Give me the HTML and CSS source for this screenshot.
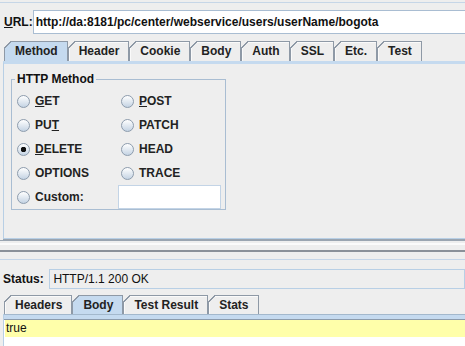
FILE: index.html
```html
<!DOCTYPE html>
<html lang="en">
<head>
    <meta charset="UTF-8">
    <title>RESTClient</title>
    <link rel="stylesheet" href="styles.css">
</head>
<body>
    <div class="window">
        <div class="top-edge"></div>

        <div class="url-row">
            <label class="url-label"><u>U</u>RL:</label>
            <div class="field url-field">http://da:8181/pc/center/webservice/users/userName/bogota</div>
        </div>

        <div class="tab-strip">
            <div class="tab selected">Method</div>
            <div class="tab">Header</div>
            <div class="tab">Cookie</div>
            <div class="tab">Body</div>
            <div class="tab">Auth</div>
            <div class="tab">SSL</div>
            <div class="tab">Etc.</div>
            <div class="tab">Test</div>
        </div>
        <div class="tab-panel req-panel">
            <fieldset class="group">
                <legend>HTTP Method</legend>
                <div class="radio-grid">
                    <div class="radio"><span class="dot"></span><span><u>G</u>ET</span></div>
                    <div class="radio right"><span class="dot"></span><span><u>P</u>OST</span></div>
                    <div class="radio"><span class="dot"></span><span>PU<u>T</u></span></div>
                    <div class="radio right"><span class="dot"></span><span>PATCH</span></div>
                    <div class="radio"><span class="dot checked"></span><span><u>D</u>ELETE</span></div>
                    <div class="radio right"><span class="dot"></span><span>HEAD</span></div>
                    <div class="radio"><span class="dot"></span><span>OPTIONS</span></div>
                    <div class="radio right"><span class="dot"></span><span>TRACE</span></div>
                    <div class="radio"><span class="dot"></span><span>Custom:</span></div>
                    <div class="field custom-field"></div>
                </div>
            </fieldset>
        </div>

        <div class="splitter"></div>

        <div class="lower">
            <div class="status-row">
                <label class="status-label">Status:</label>
                <div class="field status-field">HTTP/1.1 200 OK</div>
            </div>

            <div class="tab-strip resp-strip">
                <div class="tab">Headers</div>
                <div class="tab selected">Body</div>
                <div class="tab">Test Result</div>
                <div class="tab">Stats</div>
            </div>
            <div class="resp-panel">
                <div class="body-line">true</div>
            </div>
        </div>
    </div>
</body>
</html>
```

FILE: styles.css
```css
* {
    box-sizing: border-box;
}
body {
    margin: 0;
    background-color: #eeeeee;
    font-family: "Liberation Sans", Arial, sans-serif;
    font-size: 12px;
    color: #111;
}
.window {
    width: 465px;
    height: 346px;
    overflow: hidden;
}
.top-edge {
    height: 3px;
    border-bottom: 1px solid #c6d6e7;
}
.url-row {
    display: flex;
    align-items: center;
    padding: 7px 0 0 4px;
}
.url-label {
    width: 34px;
    font-weight: bold;
}
.field {
    height: 24px;
    border: 1px solid #a9bdd2;
    background-color: white;
    line-height: 22px;
    white-space: nowrap;
}
.url-field {
    flex: 0 0 440px;
    padding-left: 2px;
    font-weight: bold;
}

/* tabs */
.tab-strip {
    display: flex;
    height: 20px;
    margin-top: 7px;
    padding-left: 4px;
}
.tab {
    position: relative;
    height: 20px;
    padding: 0 9px 0 10px;
    border: 1px solid #8e99a6;
    border-bottom: none;
    background-color: #eeeeee;
    box-shadow: inset 1px 1px #fafafa;
    font-weight: bold;
    line-height: 19px;
    color: #222;
}
.tab::before {
    content: "";
    position: absolute;
    top: -1px;
    left: -1px;
    width: 7px;
    height: 7px;
    background: linear-gradient(135deg, #eeeeee 0 44%, #8e99a6 44% 58%, transparent 58%);
}
.tab.selected {
    background-color: #c5daef;
    box-shadow: none;
}
.tab-panel {
    height: 178px;
    margin: 0 -10px 0 3px;
    border: 1px solid #b8cfe5;
    border-top: 3px solid #c5daef;
    box-shadow: 0 1px #9aa5b1;
}

/* http method group */
.group {
    width: 215px;
    margin: 8px 0 0 7px;
    padding: 0;
    border: 1px solid #a9bdd2;
}
.group legend {
    margin-left: 3px;
    padding: 0 2px;
    line-height: 14px;
    font-weight: bold;
}
.radio-grid {
    display: grid;
    grid-template-columns: 101px 1fr;
    grid-auto-rows: 24px;
    padding: 3px 0 0 5px;
}
.radio {
    display: flex;
    align-items: center;
    gap: 5px;
    font-weight: bold;
    color: #222;
}
.radio.right {
    margin-left: 3px;
}
.dot {
    width: 13px;
    height: 13px;
    border: 1px solid #8d9cad;
    border-radius: 50%;
    background: linear-gradient(#ffffff, #c4d3e3);
}
.dot.checked {
    background: radial-gradient(circle, #111 0 2.5px, transparent 3px), linear-gradient(#ffffff, #c4d3e3);
}
.custom-field {
    width: 103px;
    align-self: center;
    border-color: #c3d4e6;
}

/* split pane divider */
.splitter {
    height: 12px;
    margin-top: 1px;
    border-top: 1px solid #9aa5b1;
    border-bottom: 2px solid #8a9099;
    background: linear-gradient(#eeeeee 0 2px, #fbfbfb 2px 4px, #eeeeee 4px);
}

/* response */
.lower {
    margin-top: 7px;
    border-top: 1px solid #c4d5e8;
}
.status-row {
    display: flex;
    align-items: center;
    padding: 9px 0 0 3px;
}
.status-label {
    width: 48px;
    font-weight: bold;
}
.status-field {
    width: 430px;
    height: 20px;
    padding-left: 3px;
    border-color: #b8cfe5;
    background-color: #eeeeee;
    line-height: 18px;
}
.resp-strip {
    height: 19px;
    margin-top: 6px;
}
.resp-strip .tab {
    height: 19px;
    line-height: 18px;
}
.resp-panel {
    height: 40px;
    margin: 0 -10px 0 3px;
    padding: 6px 0 0 1px;
    border-left: 1px solid #b8cfe5;
    background-color: white;
    box-shadow: inset 0 1px #a3b8cc, inset 0 5px #c5daef, inset 0 6px #8c9bab;
}
.body-line {
    height: 17px;
    padding-left: 1px;
    background-color: #ffffaa;
    line-height: 17px;
}
```
